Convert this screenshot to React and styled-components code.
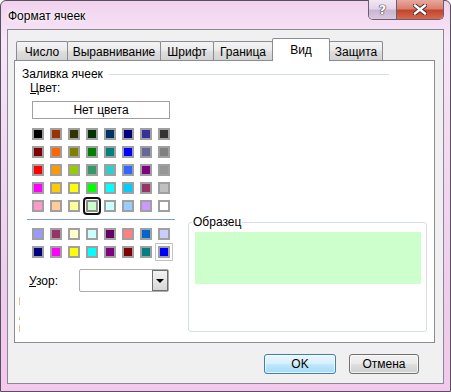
import React from 'react'
import styled, { createGlobalStyle } from 'styled-components'

const GlobalStyle = createGlobalStyle`
  html, body {
    margin: 0;
    padding: 0;
    background: #ffffff;
    overflow: hidden;
  }
  body {
    font-family: "Liberation Sans", Arial, sans-serif;
    font-size: 12px;
    color: #000;
  }
`

const PALETTE = [
  ['#000000', '#993300', '#333300', '#003300', '#003366', '#000080', '#333399', '#333333'],
  ['#800000', '#ff6600', '#808000', '#008000', '#008080', '#0000ff', '#666699', '#808080'],
  ['#ff0000', '#ff9900', '#99cc00', '#339966', '#33cccc', '#3366ff', '#800080', '#969696'],
  ['#ff00ff', '#ffcc00', '#ffff00', '#00ff00', '#00ffff', '#00ccff', '#993366', '#c0c0c0'],
  ['#ff99cc', '#ffcc99', '#ffff99', '#ccffcc', '#ccffff', '#99ccff', '#cc99ff', '#ffffff'],
]

const EXTRA = [
  ['#9999ff', '#993366', '#ffffcc', '#ccffff', '#660066', '#ff8080', '#0066cc', '#ccccff'],
  ['#000080', '#ff00ff', '#ffff00', '#00ffff', '#800080', '#800000', '#008080', '#0000ff'],
]

const TABS = [
  { label: 'Число', width: 52 },
  { label: 'Выравнивание', width: 94 },
  { label: 'Шрифт', width: 54 },
  { label: 'Граница', width: 60 },
  { label: 'Вид', width: 58, active: true },
  { label: 'Защита', width: 54 },
]

const Frame = styled.div`
  width: 451px;
  height: 392px;
  box-sizing: border-box;
  display: flex;
  flex-direction: column;
  padding: 0 6px 7px 6px;
  border: 1px solid #55505e;
  border-radius: 6px 6px 0 0;
  background: linear-gradient(
    180deg,
    #f1d2ee 0%,
    #f7e6f7 10%,
    #f2d8f1 40%,
    #efcdec 75%,
    #f3c8ec 100%
  );
`

const TitleBar = styled.div`
  height: 28px;
  display: flex;
  justify-content: space-between;
  align-items: flex-start;
`

const Title = styled.span`
  align-self: center;
  padding-left: 1px;
  margin-top: 1px;
  font-size: 12px;
  color: #000;
  text-shadow: 0 0 6px #fff, 0 0 3px #fff;
`

const Caption = styled.div`
  display: flex;
  margin-top: -1px;
  height: 19px;
  border: 1px solid #6b5e72;
  border-top: none;
  border-radius: 0 0 5px 5px;
  overflow: hidden;
`

const HelpButton = styled.div`
  width: 27px;
  display: flex;
  align-items: center;
  justify-content: center;
  border-right: 1px solid #6b5e72;
  background: linear-gradient(180deg, #f2e7f4 0%, #e4d4e8 45%, #c9b6cf 55%, #d9c8de 100%);
  font-family: "DejaVu Sans", sans-serif;
  font-weight: bold;
  font-size: 13px;
  color: #fff;
  text-shadow: 0 0 1px #2c2c3c, 0 0 1px #2c2c3c, 0 0 1px #2c2c3c;
`

const CloseButton = styled.div`
  width: 46px;
  display: flex;
  align-items: center;
  justify-content: center;
  background: linear-gradient(180deg, #e9a99d 0%, #d9806e 45%, #c4452d 55%, #d66a4f 100%);
`

const Client = styled.div`
  flex: 1;
  display: flex;
  flex-direction: column;
  padding: 8px 8px 0 6px;
  background: #f0f0f0;
  border: 1px solid #8c8796;
`

const TabRow = styled.div`
  display: flex;
  align-items: flex-end;
  height: 22px;
  margin-left: 2px;
  position: relative;
  z-index: 1;
`

const Tab = styled.div`
  box-sizing: border-box;
  width: ${p => p.$width}px;
  height: ${p => (p.$active ? 23 : 19)}px;
  margin-left: -1px;
  margin-bottom: ${p => (p.$active ? -1 : 0)}px;
  display: flex;
  align-items: center;
  justify-content: center;
  padding-top: ${p => (p.$active ? 0 : 1)}px;
  border: 1px solid #898c95;
  border-bottom: none;
  border-radius: 2px 2px 0 0;
  background: ${p =>
    p.$active
      ? '#ffffff'
      : 'linear-gradient(180deg, #f4f4f4 0%, #ebebeb 45%, #dddddd 55%, #d3d3d3 100%)'};
  font-size: 12px;
  &:first-child {
    margin-left: 0;
  }
`

const Panel = styled.div`
  box-sizing: border-box;
  width: 421px;
  height: 283px;
  border: 1px solid #898c95;
  background: #fff;
  padding: 6px 6px 0 7px;
`

const GroupHeader = styled.div`
  display: flex;
  align-items: center;
  gap: 6px;
  line-height: 14px;
`

const HeaderLine = styled.div`
  flex: 1;
  height: 1px;
  margin-right: 39px;
  margin-top: 1px;
  background: #d5dfe5;
`

const Body = styled.div`
  display: flex;
  gap: 13px;
  margin-left: 5px;
`

const LeftCol = styled.div`
  width: 148px;
  display: flex;
  flex-direction: column;
`

const Label = styled.div`
  line-height: 14px;
  margin-left: ${p => p.$indent || 0}px;
  u {
    text-decoration: underline;
  }
`

const NoColorButton = styled.div`
  box-sizing: border-box;
  width: 138px;
  height: 18px;
  margin: 6px 0 0 5px;
  border: 1px solid #a0a0a0;
  background: #fff;
  display: flex;
  align-items: center;
  justify-content: center;
  font-size: 12px;
`

const SwatchGrid = styled.div`
  display: grid;
  grid-template-columns: repeat(8, 12px);
  grid-auto-rows: 12px;
  gap: 6px;
  margin: ${p => p.$top}px 0 0 5px;
`

const Swatch = styled.div`
  box-sizing: border-box;
  width: 12px;
  height: 12px;
  border: 2px solid #a0a0a0;
  background: ${p => p.$color};
  ${p =>
    p.$selected &&
    `
    outline: 2px solid #111;
    outline-offset: 1px;
    border-radius: 1px;
    border-color: #8c8c8c;
  `}
  ${p =>
    p.$focused &&
    `
    outline: 1px solid #c4c4c4;
    outline-offset: 2px;
  `}
`

const Separator = styled.div`
  height: 1px;
  margin-top: 7px;
  background: #7f9fd0;
`

const PatternRow = styled.div`
  display: flex;
  align-items: center;
  justify-content: space-between;
  margin-top: 11px;
  padding: 0 6px 0 2px;
`

const Combo = styled.div`
  box-sizing: border-box;
  width: 90px;
  height: 23px;
  display: flex;
  justify-content: flex-end;
  border: 1px solid #abadb3;
  border-radius: 2px;
  background: #fff;
`

const ComboButton = styled.div`
  box-sizing: border-box;
  width: 16px;
  height: 100%;
  display: flex;
  align-items: center;
  justify-content: center;
  border: 1px solid #6f6f6f;
  background: linear-gradient(180deg, #f2f2f2 0%, #e6e6e6 50%, #d6d6d6 100%);
`

const Arrow = styled.div`
  width: 0;
  height: 0;
  border-left: 4px solid transparent;
  border-right: 4px solid transparent;
  border-top: 4px solid #000;
  margin-top: 1px;
`

const Ticks = styled.div`
  display: flex;
  flex-direction: column;
  margin: 5px 0 0 -8px;
`

const Tick = styled.div`
  width: 1px;
  height: ${p => p.$h}px;
  margin-top: ${p => p.$gap}px;
  background: #f3c47d;
`

const Sample = styled.fieldset`
  box-sizing: border-box;
  width: 239px;
  margin: 134px 0 0 0;
  min-width: 0;
  padding: 3px 5px 4px 6px;
  border: 1px solid #d5dfe5;
  border-radius: 3px;
  legend {
    padding: 0 1px;
    margin-left: -3px;
    line-height: 14px;
    font-size: 12px;
  }
`

const SampleFill = styled.div`
  height: 52px;
  background: ${p => p.$color};
`

const Footer = styled.div`
  display: flex;
  justify-content: flex-end;
  gap: 13px;
  margin-top: 11px;
  padding-right: 16px;
`

const DialogButton = styled.div`
  box-sizing: border-box;
  width: ${p => p.$width}px;
  height: 20px;
  display: flex;
  align-items: center;
  justify-content: center;
  border-radius: 3px;
  font-size: 12px;
  border: 1px solid ${p => (p.$primary ? '#3c7fb1' : '#707070')};
  background: ${p =>
    p.$primary
      ? 'linear-gradient(180deg, #eaf6fd 0%, #d9f0fc 45%, #bee6fd 55%, #a7d9f5 100%)'
      : 'linear-gradient(180deg, #f2f2f2 0%, #ebebeb 45%, #dddddd 55%, #cfcfcf 100%)'};
  box-shadow: inset 0 0 0 1px rgba(255, 255, 255, 0.7);
`

const CloseGlyph = () => (
  <svg width="14" height="11" viewBox="0 0 14 11">
    <path
      d="M2 1.5 L12 9.5 M12 1.5 L2 9.5"
      stroke="#3a2a2a"
      strokeWidth="4.2"
      strokeLinecap="square"
    />
    <path
      d="M2 1.5 L12 9.5 M12 1.5 L2 9.5"
      stroke="#ffffff"
      strokeWidth="2.4"
      strokeLinecap="square"
    />
  </svg>
)

export default function App() {
  return (
    <>
      <GlobalStyle />
      <Frame>
        <TitleBar>
          <Title>Формат ячеек</Title>
          <Caption>
            <HelpButton>?</HelpButton>
            <CloseButton>
              <CloseGlyph />
            </CloseButton>
          </Caption>
        </TitleBar>
        <Client>
          <TabRow>
            {TABS.map(t => (
              <Tab key={t.label} $width={t.width} $active={t.active}>
                {t.label}
              </Tab>
            ))}
          </TabRow>
          <Panel>
            <GroupHeader>
              <span>Заливка ячеек</span>
              <HeaderLine />
            </GroupHeader>
            <Body>
              <LeftCol>
                <Label $indent={3}>
                  <u>Ц</u>вет:
                </Label>
                <NoColorButton>Нет цвета</NoColorButton>
                <SwatchGrid $top={9}>
                  {PALETTE.flat().map((c, i) => (
                    <Swatch key={i} $color={c} $selected={i === 35} />
                  ))}
                </SwatchGrid>
                <Separator />
                <SwatchGrid $top={8}>
                  {EXTRA.flat().map((c, i) => (
                    <Swatch key={i} $color={c} $focused={i === 15} />
                  ))}
                </SwatchGrid>
                <PatternRow>
                  <Label>
                    <u>У</u>зор:
                  </Label>
                  <Combo>
                    <ComboButton>
                      <Arrow />
                    </ComboButton>
                  </Combo>
                </PatternRow>
                <Ticks>
                  <Tick $h={8} $gap={0} />
                  <Tick $h={3} $gap={12} />
                  <Tick $h={7} $gap={5} />
                </Ticks>
              </LeftCol>
              <Sample>
                <legend>Образец</legend>
                <SampleFill $color="#ccffcc" />
              </Sample>
            </Body>
          </Panel>
          <Footer>
            <DialogButton $primary $width={72}>
              OK
            </DialogButton>
            <DialogButton $width={70}>Отмена</DialogButton>
          </Footer>
        </Client>
      </Frame>
    </>
  )
}
